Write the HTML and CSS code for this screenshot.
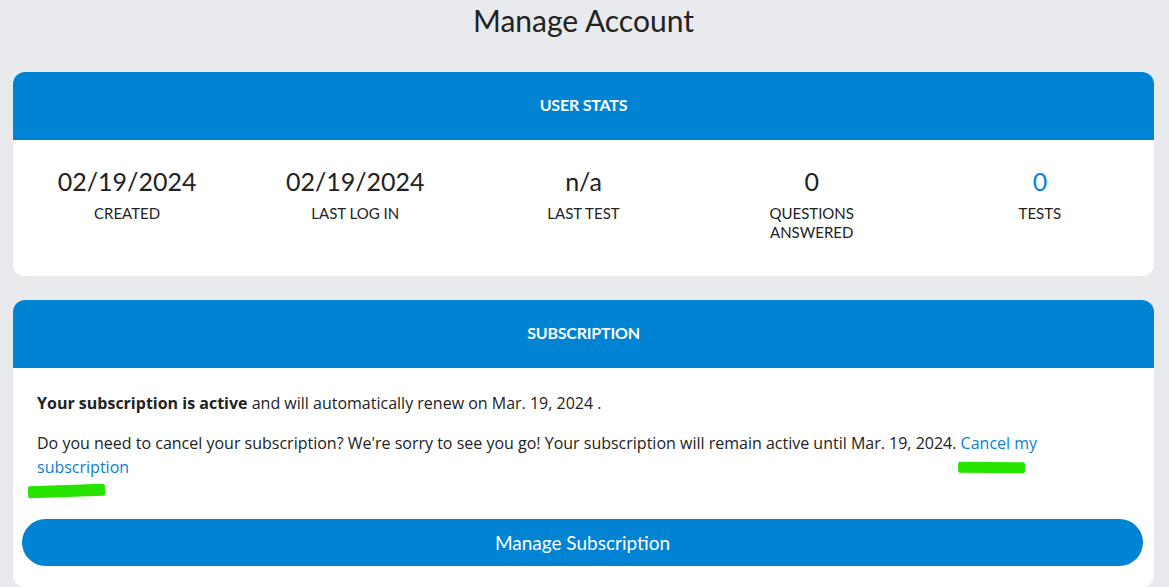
FILE: index.html
```html
<!DOCTYPE html>
<html lang="en">
<head>
<meta charset="utf-8">
<title>Manage Account</title>
<link rel="stylesheet" href="styles.css">
</head>
<body>
<main class="page">
  <h1 class="title">Manage Account</h1>

  <section class="card">
    <header class="card-header">USER STATS</header>
    <div class="stats">
      <div class="stat">
        <div class="stat-value">02/19/2024</div>
        <div class="stat-label">CREATED</div>
      </div>
      <div class="stat">
        <div class="stat-value">02/19/2024</div>
        <div class="stat-label">LAST LOG IN</div>
      </div>
      <div class="stat">
        <div class="stat-value">n/a</div>
        <div class="stat-label">LAST TEST</div>
      </div>
      <div class="stat">
        <div class="stat-value">0</div>
        <div class="stat-label">QUESTIONS ANSWERED</div>
      </div>
      <div class="stat">
        <div class="stat-value stat-link">0</div>
        <div class="stat-label">TESTS</div>
      </div>
    </div>
  </section>

  <section class="card">
    <header class="card-header">SUBSCRIPTION</header>
    <div class="sub-body">
      <div class="sub-text">
        <p><strong>Your subscription is active</strong> and will automatically renew on Mar. 19, 2024 .</p>
        <p>Do you need to cancel your subscription? We're sorry to see you go! Your subscription will remain active until Mar. 19, 2024. <a class="link" href="#">Cancel my subscription</a></p>
        <span class="mark mark-one"></span>
        <span class="mark mark-two"></span>
      </div>
      <button class="btn" type="button">Manage Subscription</button>
    </div>
  </section>
</main>
</body>
</html>
```

FILE: styles.css
```css
html, body {
  margin: 0;
  padding: 0;
}

body {
  background: #e9eaee;
  font-family: "Open Sans", "Noto Sans", sans-serif;
  color: #222;
}

.page {
  padding: 0 15px 0 13px;
}

.title {
  margin: 0;
  height: 72px;
  text-align: center;
  font-family: "Lato", "Noto Sans", sans-serif;
  font-weight: 400;
  font-size: 30px;
  line-height: 40px;
  color: #222;
}

.card {
  background: #fff;
  border-radius: 12px;
  margin-bottom: 24px;
  overflow: hidden;
}

.card-header {
  box-sizing: border-box;
  height: 68px;
  padding-bottom: 3px;
  background: #0083d3;
  color: #fff;
  display: flex;
  align-items: center;
  justify-content: center;
  font-family: "Lato", "Noto Sans", sans-serif;
  font-weight: 700;
  font-size: 16px;
  letter-spacing: -0.2px;
}

.stats {
  display: grid;
  grid-template-columns: repeat(5, 1fr);
  padding: 25px 0 34px;
}

.stat {
  display: flex;
  flex-direction: column;
  align-items: center;
  text-align: center;
}

.stat-value {
  font-family: "Lato", "Noto Sans", sans-serif;
  font-size: 25px;
  line-height: 32px;
  color: #222;
}

.stat-link {
  color: #0a84d6;
}

.stat-label {
  margin-top: 7px;
  max-width: 110px;
  font-family: "Lato", "Noto Sans", sans-serif;
  font-size: 15px;
  line-height: 19px;
  color: #222;
}

.sub-body {
  padding: 23px 11px 21px 9px;
}

.sub-text {
  position: relative;
  padding: 0 45px 0 15px;
}

.sub-text p {
  margin: 0 0 16px;
  font-size: 16px;
  line-height: 24px;
  color: #222;
}

.sub-text p:last-of-type {
  margin-bottom: 40px;
}

.sub-text strong {
  font-weight: 700;
}

.link {
  color: #0a7fcf;
  text-decoration: none;
}

.mark {
  position: absolute;
  background: #27e400;
  border-radius: 2px;
}

.mark-one {
  left: 936px;
  top: 71px;
  width: 67px;
  height: 11px;
  transform: rotate(0.5deg);
}

.mark-two {
  left: 6px;
  top: 94px;
  width: 77px;
  height: 12px;
  transform: rotate(-2deg);
}

.btn {
  display: block;
  width: 100%;
  height: 47px;
  border: 0;
  border-radius: 24px;
  background: #0083d3;
  color: #fff;
  font-family: "Lato", "Noto Sans", sans-serif;
  font-size: 19px;
  cursor: pointer;
}
```
